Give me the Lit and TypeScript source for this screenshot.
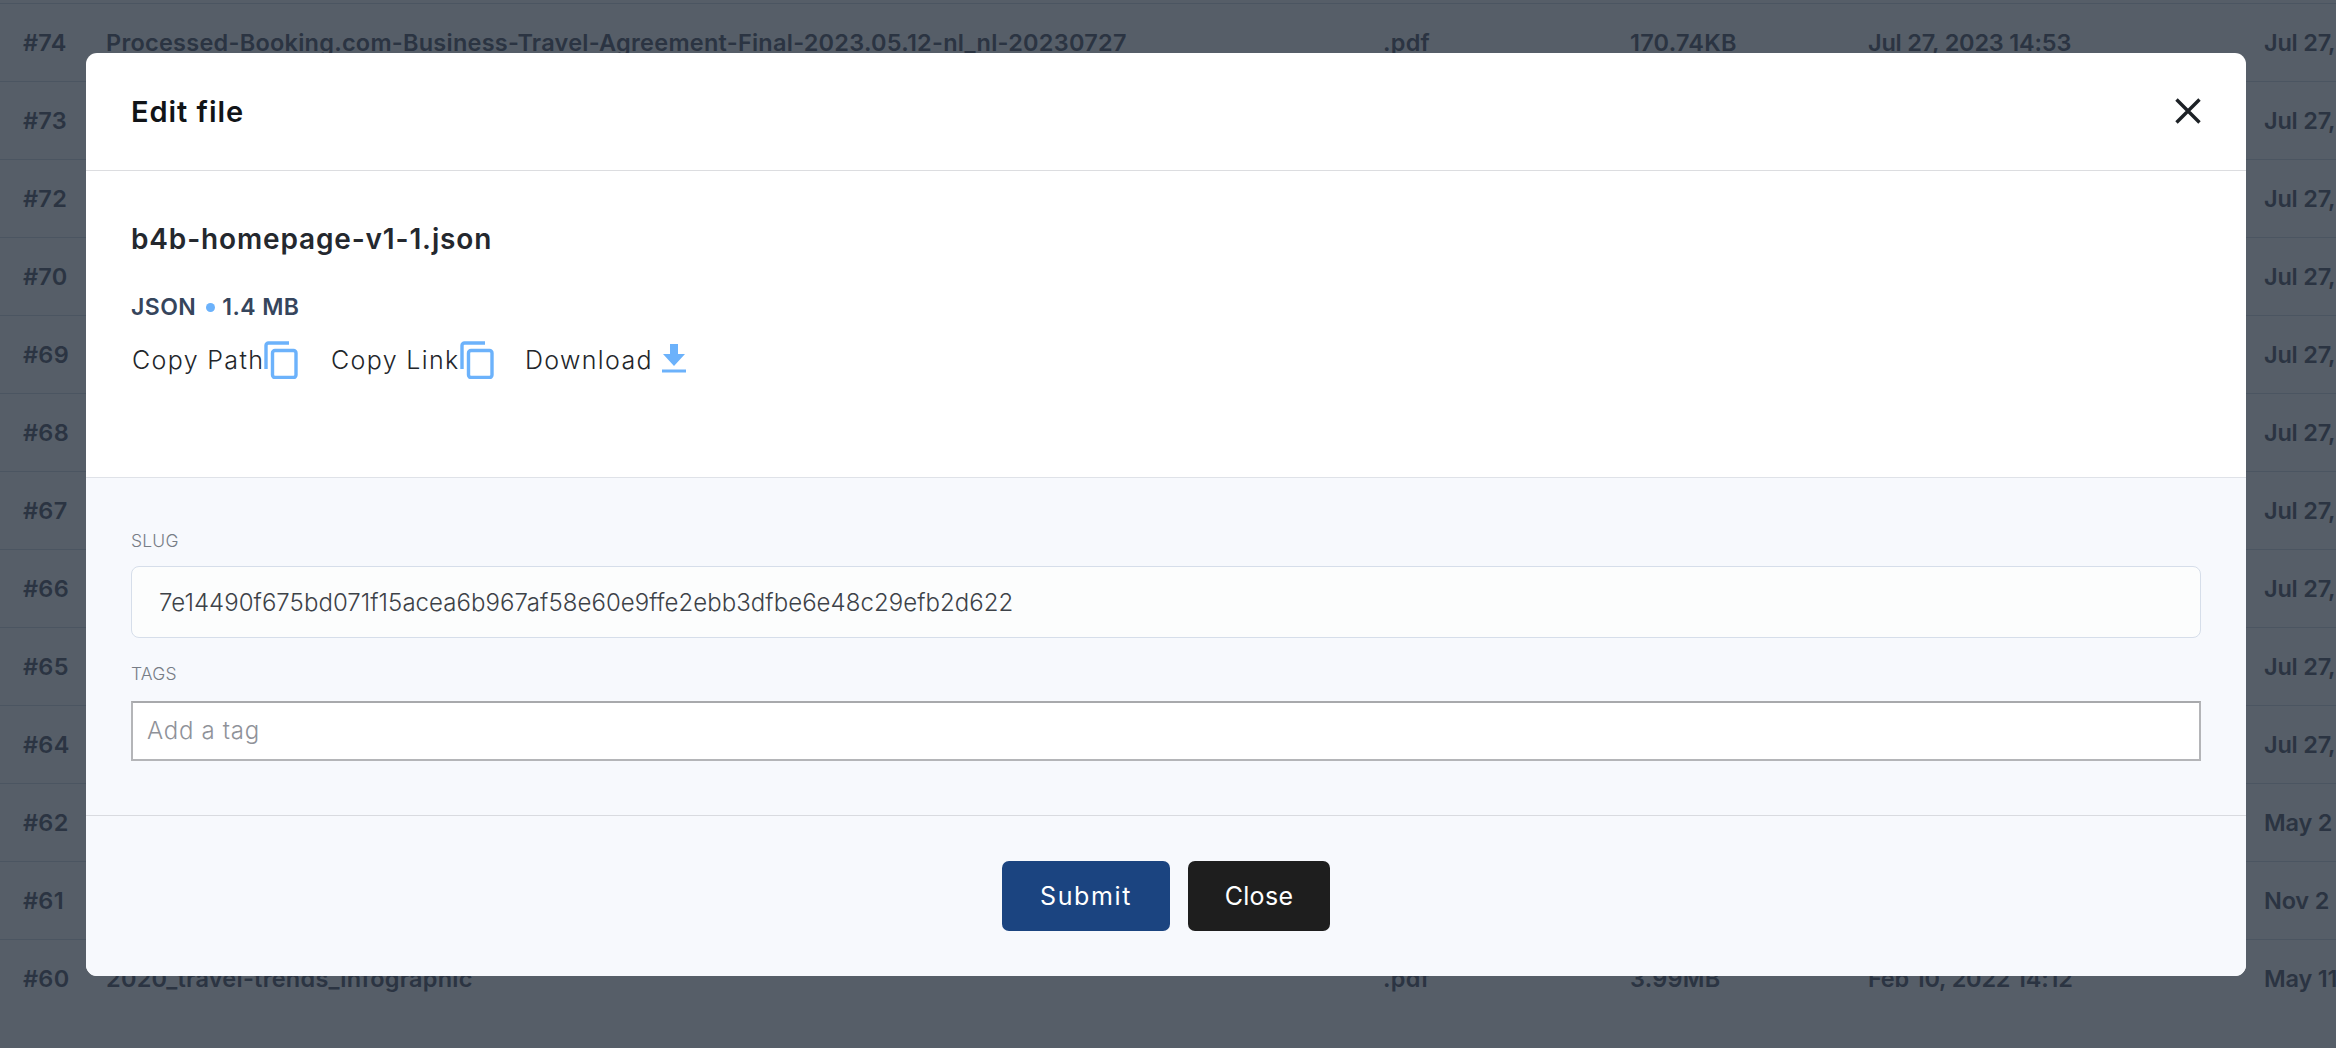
import { LitElement, html, css } from "lit";
import { customElement } from "lit/decorators.js";

type Row = { id: string; name?: string; ext?: string; size?: string; created?: string; updated: string };
const rows: Row[] = [
  { id: "#74", name: "Processed-Booking.com-Business-Travel-Agreement-Final-2023.05.12-nl_nl-20230727", ext: ".pdf", size: "170.74KB", created: "Jul 27, 2023 14:53", updated: "Jul 27," },
  { id: "#73", updated: "Jul 27," },
  { id: "#72", updated: "Jul 27," },
  { id: "#70", updated: "Jul 27," },
  { id: "#69", updated: "Jul 27," },
  { id: "#68", updated: "Jul 27," },
  { id: "#67", updated: "Jul 27," },
  { id: "#66", updated: "Jul 27," },
  { id: "#65", updated: "Jul 27," },
  { id: "#64", updated: "Jul 27," },
  { id: "#62", updated: "May 2" },
  { id: "#61", updated: "Nov 2" },
  { id: "#60", name: "2020_travel-trends_infographic", ext: ".pdf", size: "3.99MB", created: "Feb 10, 2022 14:12", updated: "May 11" },
];

const copyIcon = html`<svg class="copy" width="34" height="38" viewBox="0 0 34 38" fill="none" stroke="#6cb2fb" stroke-width="3.4">
  <path d="M25 2H4.500A2.500 2.500 0 0 0 2 4.500V28" />
  <rect x="8.500" y="9.500" width="23.500" height="27" rx="2.500" />
</svg>`;

@customElement("app-root")
export class AppRoot extends LitElement {
  static styles = css`
    :host {
      display: block;
      position: relative;
      width: 2336px;
      height: 1048px;
      overflow: hidden;
      background: #565e68;
      font-family: "Inter", "Liberation Sans", sans-serif;
    }
    .table {
      padding-top: 3px;
      width: 2336px;
    }
    .row {
      display: grid;
      grid-template-columns: 83px 1277px 247px 238px 396px 72px;
      height: 78px;
      box-sizing: border-box;
      border-top: 1.5px solid #4b5561;
      align-items: center;
      padding-left: 23px;
      font-size: 23.500px;
      font-weight: 600;
      color: #2b3442;
      white-space: nowrap;
      overflow: hidden;
      letter-spacing: 0.25px;
    }
    .row span {
      min-width: 0;
    }
    .row .date {
      letter-spacing: -0.2px;
    }
    .overlay {
      position: absolute;
      left: 86px;
      top: 53px;
      width: 2160px;
      height: 923px;
    }
    .modal {
      height: 100%;
      display: flex;
      flex-direction: column;
      background: #fff;
      border-radius: 11px;
      overflow: hidden;
    }
    .head {
      height: 118px;
      box-sizing: border-box;
      flex: none;
      border-bottom: 1.5px solid #dcdde0;
      display: flex;
      align-items: center;
      justify-content: space-between;
      padding: 0 45px 1px 45px;
    }
    .title {
      font-size: 29px;
      font-weight: 600;
      color: #111418;
      letter-spacing: 0.95px;
      margin-top: 1px;
    }
    .x {
      display: block;
    }
    .info {
      flex: none;
      height: 307px;
      box-sizing: border-box;
      padding: 50px 45px 0;
      border-bottom: 1.5px solid #dfe2e8;
    }
    .fname {
      font-size: 28px;
      line-height: 36px;
      font-weight: 600;
      color: #24282e;
      letter-spacing: 0.85px;
    }
    .meta {
      margin-top: 36px;
      display: flex;
      align-items: center;
      font-size: 23px;
      line-height: 28px;
      font-weight: 600;
      color: #36455c;
      letter-spacing: 0.45px;
    }
    .dot {
      width: 9px;
      height: 9px;
      border-radius: 50%;
      background: #6cb2fb;
      margin: 0 7px 0 10px;
    }
    .actions {
      display: flex;
      align-items: center;
      margin-top: 18px;
      font-size: 25px;
      font-weight: 300;
      color: #23262a;
      height: 42px;
      margin-left: 1px;
    }
    .act {
      display: flex;
      align-items: center;
      letter-spacing: 1.35px;
    }
    .act.a1 {
      width: 199px;
    }
    .act.a2 {
      width: 194px;
    }
    .copy {
      margin-left: 0;
      margin-top: -1px;
    }
    .dl {
      margin-left: 9px;
      margin-top: -2px;
    }
    .form {
      flex: none;
      height: 338px;
      box-sizing: border-box;
      background: #f7f9fd;
      padding: 51.500px 45px 0;
      border-bottom: 1.5px solid #d9dbe0;
    }
    .label {
      font-size: 17.5px;
      line-height: 22px;
      font-weight: 300;
      color: #777d86;
      letter-spacing: 0.2px;
    }
    .slug {
      margin-top: 14px;
      height: 72px;
      box-sizing: border-box;
      background: #fcfdfd;
      border: 1.5px solid #d6deea;
      border-radius: 8px;
      display: flex;
      align-items: center;
      padding: 2px 27px 0;
      font-size: 24px;
      font-weight: 300;
      color: #3d4248;
      letter-spacing: 0.05px;
    }
    .label.tags {
      margin-top: 25px;
    }
    .tag {
      margin-top: 16px;
      height: 60.500px;
      box-sizing: border-box;
      background: #fff;
      border: 2px solid #b4b5b8;
      border-top-color: #a8a9ac;
      display: flex;
      align-items: center;
      padding: 0 14px;
      font-size: 24px;
      font-weight: 300;
      color: #8f9299;
      letter-spacing: 0.7px;
    }
    .foot {
      flex: 1;
      background: #f7f9fd;
      display: flex;
      justify-content: center;
      gap: 18px;
      padding: 45px 0 0 0;
    }
    .btn {
      height: 70px;
      box-sizing: border-box;
      border-radius: 7px;
      color: #fff;
      font-size: 25px;
      font-weight: 400;
      display: flex;
      align-items: center;
      justify-content: center;
    }
    .submit {
      width: 168px;
      background: #1b4480;
      letter-spacing: 1.6px;
    }
    .close {
      width: 142px;
      background: #1e1e1e;
      letter-spacing: 0.3px;
    }
  `;

  render() {
    return html`
      <div class="table">
        ${rows.map(
          (r) => html`<div class="row">
            <span>${r.id}</span>
            <span>${r.name ?? ""}</span>
            <span>${r.ext ?? ""}</span>
            <span>${r.size ?? ""}</span>
            <span class="date">${r.created ?? ""}</span>
            <span class="date">${r.updated}</span>
          </div>`
        )}
      </div>
      <div class="overlay">
        <div class="modal">
          <div class="head">
            <div class="title">Edit file</div>
            <svg class="x" width="26" height="26" viewBox="0 0 26 26" fill="none" stroke="#1d2126" stroke-width="3.4">
              <path d="M1.500 1.500 24.500 24.500M24.500 1.500 1.500 24.500" />
            </svg>
          </div>
          <div class="info">
            <div class="fname">b4b-homepage-v1-1.json</div>
            <div class="meta"><span>JSON</span><span class="dot"></span><span>1.4 MB</span></div>
            <div class="actions">
              <span class="act a1">Copy Path${copyIcon}</span>
              <span class="act a2">Copy Link${copyIcon}</span>
              <span class="act">Download
                <svg class="dl" width="24" height="30" viewBox="0 0 24 30" fill="#6cb2fb">
                  <path d="M8 0h8v10h7L12 22 1 10h7z" />
                  <rect x="0" y="25.500" width="24" height="3" />
                </svg>
              </span>
            </div>
          </div>
          <div class="form">
            <div class="label">SLUG</div>
            <div class="slug">7e14490f675bd071f15acea6b967af58e60e9ffe2ebb3dfbe6e48c29efb2d622</div>
            <div class="label tags">TAGS</div>
            <div class="tag">Add a tag</div>
          </div>
          <div class="foot">
            <div class="btn submit">Submit</div>
            <div class="btn close">Close</div>
          </div>
        </div>
      </div>
    `;
  }
}
